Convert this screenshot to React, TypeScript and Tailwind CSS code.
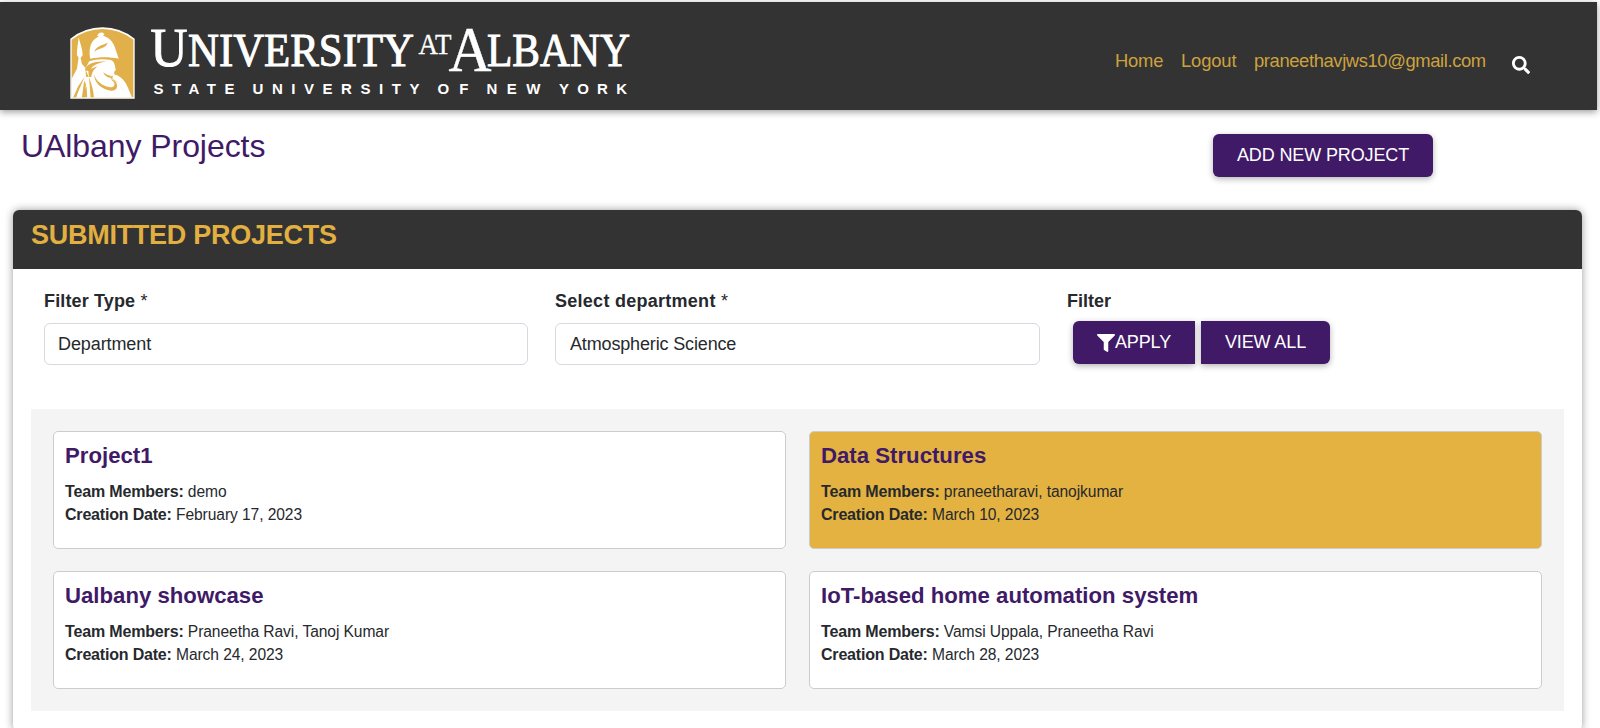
import { FaFilter, FaSearch } from "react-icons/fa";

const sans = "font-['Liberation_Sans',Arial,sans-serif]";

const projects = [
  { title: "Project1", members: "demo", date: "February 17, 2023", active: false },
  { title: "Data Structures", members: "praneetharavi, tanojkumar", date: "March 10, 2023", active: true },
  { title: "Ualbany showcase", members: "Praneetha Ravi, Tanoj Kumar", date: "March 24, 2023", active: false },
  { title: "IoT-based home automation system", members: "Vamsi Uppala, Praneetha Ravi", date: "March 28, 2023", active: false },
];

function Emblem() {
  return (
    <svg viewBox="30 35 196 216" className="mt-[25px] mr-[1px] h-[72px] w-[65px] shrink-0" preserveAspectRatio="none">
      <path d="M31 250V70Q75 36 128 36T225 70V250Z" fill="#fff" />
      <path d="M35 246V73Q77 41 128 41T221 73V246Z" fill="#e2b04a" />
      <g fill="#fff">
        <path d="M56 66C62 88 69 106 68 120L62 128L66 146L77 158L78 186L56 212L44 246H35V190L51 160L56 127L51 119C50 103 55 84 56 66Z" />
        <path d="M112 61C117 50 128 48 134 57L130 61C152 67 163 84 168 104L177 130C150 124 119 124 91 130C88 114 88 94 97 80C102 71 109 67 117 64Z" />
        <path d="M88 138C105 131 128 130 150 133C160 135 165 143 165 150L168 164L164 168L163 176C161 183 154 183 148 184C155 192 166 196 178 204L188 222L204 246H92L88 216L86 184L76 160Z" />
        <path d="M160 176C180 180 196 194 205 218C210 230 214 238 217 246H198C190 222 180 202 158 190Z" />
        <path d="M70 186L88 184L94 246H82L80 212L66 246H47L62 212Z" />
      </g>
      <g fill="#e2b04a">
        <path d="M103 109C108 95 122 90 144 82C139 94 129 97 119 101C112 103 107 106 103 109Z" />
        <path d="M76 160C83 145 104 136 140 139C118 141 101 148 93 160L113 153C101 163 96 171 94 186L87 184L85 166L76 166Z" />
        <path d="M103 176C106 196 128 212 148 215C158 217 164 214 164 208C165 201 159 197 152 191C168 196 175 206 171 217C168 226 156 228 143 224C120 217 102 199 103 176Z" />
        <path d="M130 171C137 177 146 181 156 182L148 187C140 185 133 179 130 171Z" />
        <path d="M87 186C96 207 101 228 102 246H92C91 224 89 204 87 186Z" />
        <path d="M74 184L66 204L56 222L49 246H40L54 214Z" />
        <path d="M73 196L78 206L75 246H66L70 216Z" />
      </g>
    </svg>
  );
}

function Wordmark() {
  return (
    <svg viewBox="145 20 490 82" className="mt-[18px] ml-[9px] h-[82px] w-[490px] shrink-0 overflow-visible" fill="#fff">
      <g fontFamily="'Liberation Serif', serif" stroke="#fff" strokeWidth="1">
        <text x="150.5" y="65.5" fontSize="54" textLength="37" lengthAdjust="spacingAndGlyphs">U</text>
        <text x="188" y="65.5" fontSize="47" textLength="226" lengthAdjust="spacingAndGlyphs">NIVERSITY</text>
        <text x="418.5" y="53.5" fontSize="29.5" strokeWidth="0.3" textLength="33" lengthAdjust="spacingAndGlyphs">AT</text>
        <text x="448.5" y="70.5" fontSize="64" strokeWidth="0.4" textLength="43" lengthAdjust="spacingAndGlyphs">A</text>
        <text x="487" y="65.5" fontSize="47" textLength="143" lengthAdjust="spacingAndGlyphs">LBANY</text>
      </g>
      <g fontFamily="'Liberation Sans', sans-serif" fontWeight="bold" fontSize="15">
        <text x="153.5" y="94" textLength="81">STATE</text>
        <text x="252.5" y="94" textLength="167">UNIVERSITY</text>
        <text x="437.5" y="94" textLength="31">OF</text>
        <text x="486.5" y="94" textLength="54">NEW</text>
        <text x="559" y="94" textLength="68">YORK</text>
      </g>
    </svg>
  );
}

const buttonBase =
  "flex h-[43px] items-center justify-center bg-[#401a66] text-[18px] tracking-[-0.12px] text-white shadow-[0_2px_6px_rgba(0,0,0,0.3)]";

export default function App() {
  return (
    <div className={`h-[728px] w-[1600px] overflow-hidden bg-white pt-[2px] text-[#26292d] ${sans}`}>
      <header className="flex h-[108px] w-[1597px] items-start bg-[#333] pl-[70px] shadow-[0_2px_7px_rgba(0,0,0,0.4)]">
        <Emblem />
        <Wordmark />
        <nav className="mt-[46px] mr-[67px] ml-auto flex items-start text-[18.4px] leading-[26px] text-[#cda23e]">
          <a className="w-[66px] tracking-[-0.2px]">Home</a>
          <a className="w-[73px] tracking-[-0.15px]">Logout</a>
          <a className="w-[258px] tracking-[-0.39px]">praneethavjws10@gmail.com</a>
          <FaSearch className="mt-[8px] h-[18px] w-[18px] text-white" />
        </nav>
      </header>

      <div className="flex h-[100px] items-start justify-between pr-[167px] pl-[21px]">
        <h1 className="mt-[17px] text-[32px] leading-[38px] tracking-[-0.07px] text-[#401a66]">UAlbany Projects</h1>
        <button className={`mt-[24px] w-[220px] rounded-[6px] ${buttonBase}`}>ADD NEW PROJECT</button>
      </div>

      <section className="ml-[13px] h-[521px] w-[1569px] rounded-[6px] bg-white shadow-[0_0_8px_rgba(0,0,0,0.4)]">
        <h2 className="h-[59px] rounded-t-[6px] bg-[#333] pt-[8px] pl-[18px] text-[27px] leading-[34px] font-bold tracking-[-0.27px] text-[#e2b040]">
          SUBMITTED PROJECTS
        </h2>
        <div className="flex h-[140px] pt-[19px] pl-[31px]">
          <div className="w-[511px]">
            <div className="text-[18px] leading-[26px] font-bold tracking-[0.14px]">Filter Type <span className="font-normal">*</span></div>
            <div className="mt-[9px] flex h-[42px] w-[484px] items-center rounded-[6px] border border-[#d5dade] pl-[13px] text-[18px] tracking-[-0.1px]">Department</div>
          </div>
          <div className="w-[512px]">
            <div className="text-[18px] leading-[26px] font-bold tracking-[0.27px]">Select department <span className="font-normal">*</span></div>
            <div className="mt-[9px] flex h-[42px] w-[485px] items-center rounded-[6px] border border-[#d5dade] pl-[14px] text-[18px] tracking-[-0.15px]">Atmospheric Science</div>
          </div>
          <div>
            <div className="text-[18px] leading-[26px] font-bold">Filter</div>
            <div className="mt-[7px] ml-[6px] flex gap-[6px]">
              <button className={`w-[122px] rounded-l-[6px] ${buttonBase}`}><FaFilter className="h-[18px] w-[18px]" />APPLY</button>
              <button className={`w-[129px] rounded-r-[6px] ${buttonBase}`}>VIEW ALL</button>
            </div>
          </div>
        </div>
        <div className="ml-[18px] grid h-[302px] w-[1533px] grid-cols-2 content-start gap-x-[23px] gap-y-[22px] bg-[#f4f4f4] pt-[22px] pr-[22px] pl-[22px]">
          {projects.map((p) => (
            <article
              key={p.title}
              className={`h-[118px] rounded-[5px] border border-[#ccc] pt-[10px] pl-[11px] ${p.active ? "bg-[#e3b240]" : "bg-white"}`}
            >
              <h3 className="text-[22.2px] leading-[28px] font-bold text-[#401a66]">{p.title}</h3>
              <p className="mt-[10px] text-[15.6px] leading-[23px] tracking-[-0.08px]">
                <b className="text-[16px] tracking-[-0.16px]">Team Members:</b> {p.members}
              </p>
              <p className="text-[15.6px] leading-[23px] tracking-[-0.08px]">
                <b className="text-[16px] tracking-[-0.19px]">Creation Date:</b> {p.date}
              </p>
            </article>
          ))}
        </div>
      </section>
    </div>
  );
}
